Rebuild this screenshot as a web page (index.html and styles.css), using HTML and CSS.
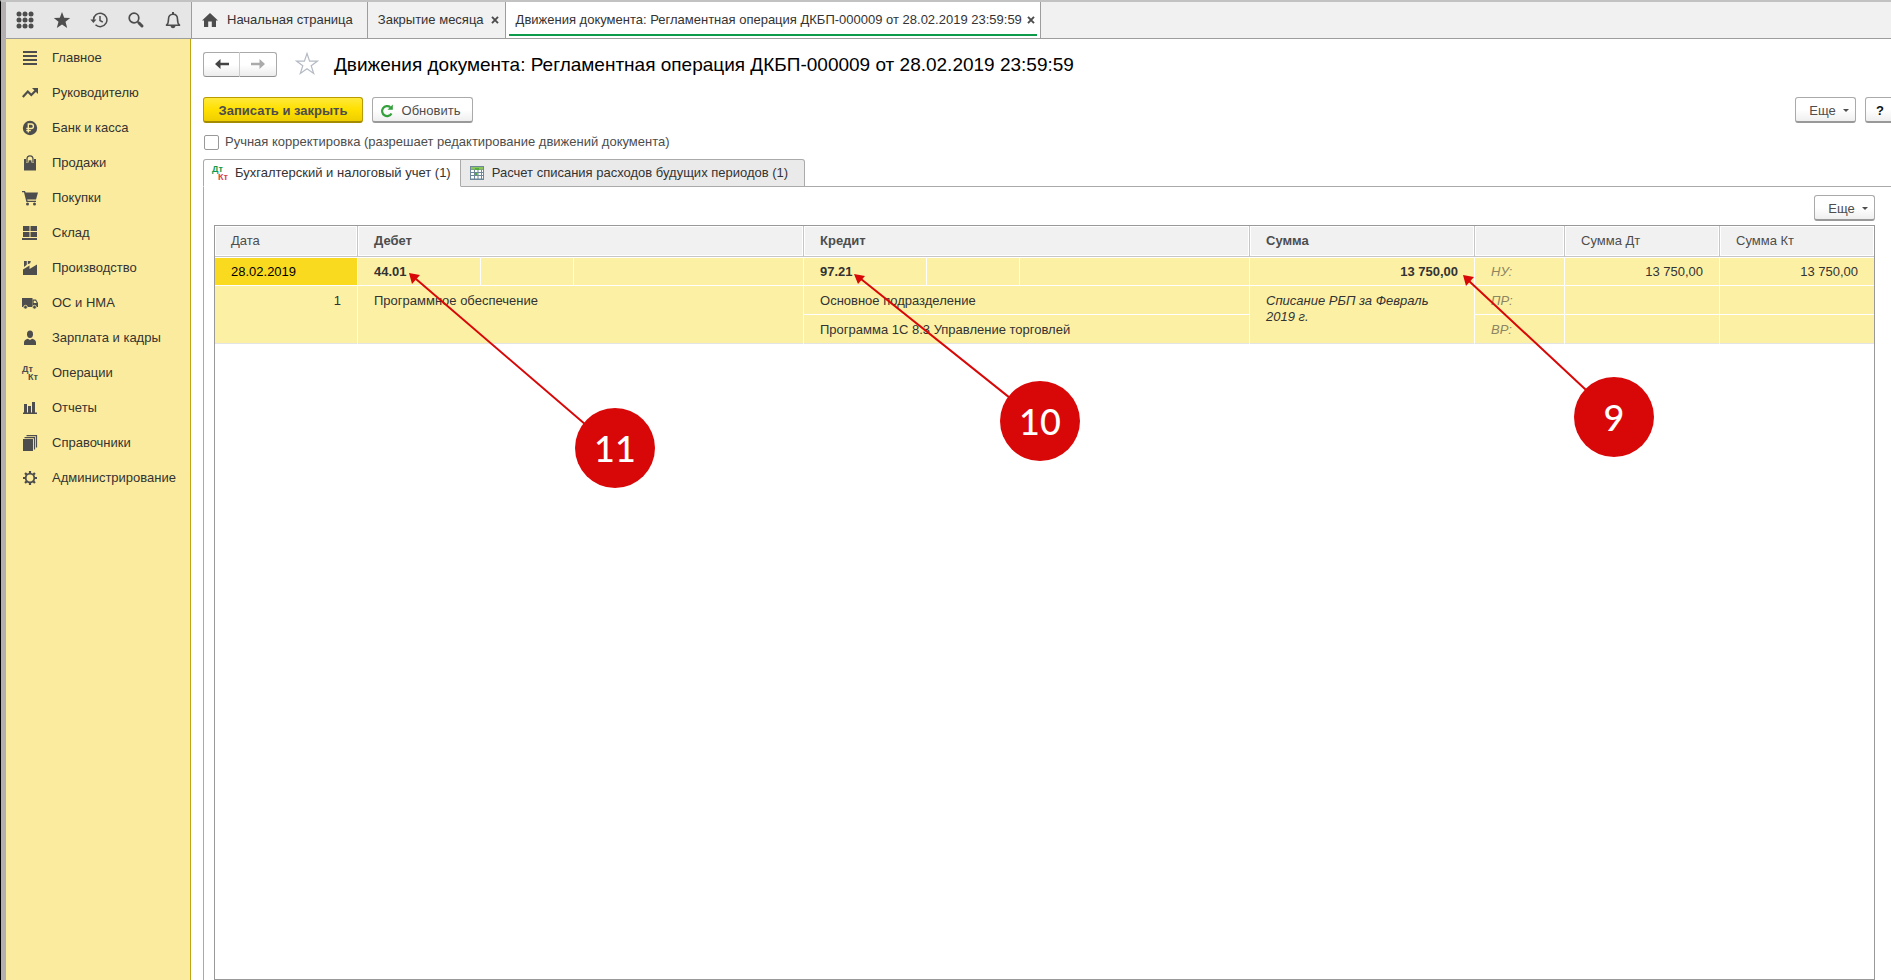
FILE: index.html
```html
<!DOCTYPE html>
<html lang="ru">
<head>
<meta charset="utf-8">
<title>Движения документа: Регламентная операция ДКБП-000009</title>
<link rel="stylesheet" href="styles.css">
</head>
<body>
<div class="window">
  <header class="topbar">
    <div class="tools">
      <button class="tool" aria-label="Меню"><svg width="18" height="18" viewBox="0 0 18 18"><g fill="#4d4d4d"><circle cx="3" cy="3" r="2.500"/><circle cx="9" cy="3" r="2.500"/><circle cx="15" cy="3" r="2.500"/><circle cx="3" cy="9" r="2.500"/><circle cx="9" cy="9" r="2.500"/><circle cx="15" cy="9" r="2.500"/><circle cx="3" cy="15" r="2.500"/><circle cx="9" cy="15" r="2.500"/><circle cx="15" cy="15" r="2.500"/></g></svg></button>
      <button class="tool" aria-label="Избранное"><svg width="18" height="18" viewBox="0 0 18 18"><path fill="#4d4d4d" d="M9 1l2.200 5.700 6 .3-4.700 3.800 1.700 6.200L9 13.600 3.800 17l1.700-6.200L.8 7l6-.3z"/></svg></button>
      <button class="tool" aria-label="История"><svg width="18" height="18" viewBox="0 0 18 18" fill="none" stroke="#4d4d4d" stroke-width="1.500"><path d="M3.500 9.500V9a6.700 6.700 0 1 1 2 4.700"/><path d="M10 5v4.500l2.800 1.700"/><path d="M.4 8.500h6L3.400 12z" fill="#4d4d4d" stroke="none"/></svg></button>
      <button class="tool" aria-label="Поиск"><svg width="18" height="18" viewBox="0 0 18 18" fill="none" stroke="#4d4d4d"><circle cx="7" cy="7" r="4.800" stroke-width="1.700"/><path d="M10.500 10.500l1.500 1.500" stroke-width="1.700"/><path d="M12 12l3 3" stroke-width="3" stroke-linecap="round"/></svg></button>
      <button class="tool" aria-label="Уведомления"><svg width="18" height="18" viewBox="0 0 18 18"><path fill="none" stroke="#4d4d4d" stroke-width="1.600" stroke-linejoin="round" d="M2.500 14.200c1.800-1.500 2-3 2-6 0-3 1.700-5 4.500-5s4.500 2 4.500 5c0 3 .2 4.500 2 6z"/><path fill="#4d4d4d" d="M8 1h2v2.500H8zM6.500 15h5c-.5 1.500-1.200 2.200-2.500 2.200S7 16.500 6.500 15z"/></svg></button>
    </div>
    <nav class="tabs" aria-label="Открытые окна">
      <a class="tab tab-home" href="#"><svg width="16" height="14" viewBox="0 0 16 14"><path fill="#4d4d4d" d="M8 0l8 7.500h-2V14H9.800V8.500H6.200V14H2V7.500H0z"/></svg><span>Начальная страница</span></a>
      <div class="tab"><a href="#">Закрытие месяца</a><button class="close" aria-label="Закрыть"><svg width="8" height="8" viewBox="0 0 8 8"><path d="M1 .8l6 6.400M7 .8L1 7.200" stroke="#4d4d4d" stroke-width="1.900"/></svg></button></div>
      <div class="tab tab-active"><a href="#">Движения документа: Регламентная операция ДКБП-000009 от 28.02.2019 23:59:59</a><button class="close" aria-label="Закрыть"><svg width="8" height="8" viewBox="0 0 8 8"><path d="M1 .8l6 6.400M7 .8L1 7.200" stroke="#4d4d4d" stroke-width="1.900"/></svg></button></div>
    </nav>
  </header>
  <div class="body">
    <nav class="sidebar" aria-label="Разделы">
      <a href="#"><svg class="ico" viewBox="0 0 16 16"><path fill="#4d4d4d" d="M1 1h14v2H1zM1 5h14v2H1zM1 9h14v2H1zM1 13h14v2H1z"/></svg>Главное</a>
      <a href="#"><svg class="ico" viewBox="0 0 16 16"><path fill="none" stroke="#4d4d4d" stroke-width="2.200" d="M.8 12l5-5.500 3.500 3.500 5-5"/><path fill="#4d4d4d" d="M10 3h6v6z"/></svg>Руководителю</a>
      <a href="#"><svg class="ico" viewBox="0 0 16 16"><circle cx="8" cy="8" r="7.200" fill="#4d4d4d"/><path fill="none" stroke="#faeb9e" stroke-width="1.400" d="M6.300 12.500V4h2.900a2.200 2.200 0 0 1 0 4.500H4.300M4.300 10.600h4.500"/></svg>Банк и касса</a>
      <a href="#"><svg class="ico" viewBox="0 0 16 16"><path fill="#4d4d4d" d="M2 4h12v11.500H2z"/><path fill="#faeb9e" d="M4 3.500h8v1.800H4z"/><path fill="none" stroke="#faeb9e" stroke-width="2.600" d="M5.300 7.500V4M10.700 7.500V4"/><path fill="none" stroke="#4d4d4d" stroke-width="1.300" d="M5 7V4c0-4.300 6-4.300 6 0v3"/></svg>Продажи</a>
      <a href="#"><svg class="ico" viewBox="0 0 16 16"><path fill="#4d4d4d" d="M0 1h3l.6 1.500H16L14 9.500H5.200l.4 1.300H14V12H4.400L2 2.200H0z"/><circle cx="5.500" cy="14" r="1.500" fill="#4d4d4d"/><circle cx="12.500" cy="14" r="1.500" fill="#4d4d4d"/></svg>Покупки</a>
      <a href="#"><svg class="ico" viewBox="0 0 16 16"><path fill="#4d4d4d" d="M1 1h6.500v5H1zM8.500 1H15v5H8.500zM1 7h6.500v5H1zM8.500 7H15v5H8.500zM0 13h15v2H0z"/></svg>Склад</a>
      <a href="#"><svg class="ico" viewBox="0 0 16 16"><path fill="#4d4d4d" d="M1 15V9.500L7.500 5.500V9L15 4.500V15zM2 1h2.800v3.800L2 7zM5.800 1h3l-.6 2.200-2.400 1z"/></svg>Производство</a>
      <a href="#"><svg class="ico" viewBox="0 0 16 16"><path fill="#4d4d4d" d="M0 3h10.500v9H0z"/><path fill="#4d4d4d" d="M10.500 4.500h3.500L16 8v4h-5.500z"/><path fill="#faeb9e" d="M11.700 5.700h1.800L14.700 8h-3z"/><g fill="#4d4d4d" stroke="#faeb9e" stroke-width=".8"><circle cx="3.500" cy="12.200" r="1.900"/><circle cx="12.500" cy="12.200" r="1.900"/></g></svg>ОС и НМА</a>
      <a href="#"><svg class="ico" viewBox="0 0 16 16"><ellipse cx="8" cy="4.200" rx="3" ry="3.700" fill="#4d4d4d"/><path fill="#4d4d4d" d="M2 15v-2.500c0-2 2-3.200 3.800-3.700L8 10l2.200-1.200c1.800.5 3.800 1.700 3.800 3.700V15z"/></svg>Зарплата и кадры</a>
      <a href="#"><span class="dtkt"><span>Дт</span><span>Кт</span></span>Операции</a>
      <a href="#"><svg class="ico" viewBox="0 0 16 16"><path fill="#4d4d4d" d="M2 4h3v9H2zM6 6h3v7H6zM10 2h3v11h-3zM1 12.500h14V14H1z"/></svg>Отчеты</a>
      <a href="#"><svg class="ico" viewBox="0 0 16 16"><path fill="#4d4d4d" d="M1 4h10v12H1z"/><path fill="none" stroke="#4d4d4d" stroke-width="1.200" d="M2.500 2.600h10V14.500M4.500.6h10v12"/></svg>Справочники</a>
      <a href="#"><svg class="ico" viewBox="0 0 16 16"><g fill="none" stroke="#4d4d4d"><circle cx="8" cy="8" r="4.300" stroke-width="1.800"/><path stroke-width="2.200" d="M8 1v2.500M8 12.500V15M1 8h2.500M12.500 8H15M3.050 3.050l1.800 1.800M11.150 11.150l1.800 1.800M12.950 3.050l-1.800 1.800M4.850 11.150l-1.800 1.800"/></g></svg>Администрирование</a>
    </nav>
    <main class="content">
      <div class="titlebar">
        <div class="history">
          <button aria-label="Назад"><svg width="14" height="10" viewBox="0 0 14 10"><path fill="#444" d="M0 5l5.500-5v3.700H14v2.600H5.500V10z"/></svg></button>
          <button aria-label="Вперед"><svg width="14" height="10" viewBox="0 0 14 10"><path fill="#aaa" d="M14 5L8.500 0v3.700H0v2.600h8.500V10z"/></svg></button>
        </div>
        <button class="fav" aria-label="В избранное"><svg width="24" height="24" viewBox="0 0 24 24"><path fill="#fff" stroke="#b4bac4" stroke-width="1.200" d="M12 1.500l2.600 7.600h8l-6.400 4.700 2.500 7.700L12 16.800l-6.700 4.700 2.500-7.700L1.400 9.100h8z"/></svg></button>
        <h1>Движения документа: Регламентная операция ДКБП-000009 от 28.02.2019 23:59:59</h1>
      </div>
      <div class="commands">
        <button class="btn btn-primary">Записать и закрыть</button>
        <button class="btn btn-refresh"><svg width="14" height="14" viewBox="0 0 14 14"><path fill="none" stroke="#34a03c" stroke-width="2.200" d="M11.500 9.500A5 5 0 1 1 10.300 3.200"/><path fill="#34a03c" d="M12.800.5v5.300H7.500z"/></svg>Обновить</button>
        <span class="spacer"></span>
        <button class="btn btn-more">Еще<i class="caret"></i></button>
        <button class="btn btn-help">?</button>
      </div>
      <label class="manual"><input type="checkbox">Ручная корректировка (разрешает редактирование движений документа)</label>
      <div class="pages">
        <button class="page page-active"><span class="dtkt dtkt-color"><span>Дт</span><span>Кт</span></span>Бухгалтерский и налоговый учет (1)</button>
        <button class="page"><svg width="14" height="14" viewBox="0 0 14 14"><path fill="#6d8898" d="M0 0h14v14H0z"/><path fill="#8cc55c" d="M1 1h12v2.500H1z"/><path fill="#fff" d="M1 4h3v2H1zM5 4h2.500v2H5zM8.500 4H11v2H8.500zM12 4h1v2h-1zM1 7h3v2H1zM5 7h2.500v2H5zM12 7h1v2h-1zM1 10h3v2.500H1zM5 10h2.500v2.500H5zM8.500 10H11v2.500H8.500zM12 10h1v2.500h-1z"/><path fill="#4fae3c" d="M5 2h4v2H5zM5 7h2.500v2H5z"/><path fill="#fff" d="M8.500 7H11v2H8.500z"/></svg>Расчет списания расходов будущих периодов (1)</button>
      </div>
      <section class="panel">
        <div class="panel-bar"><button class="btn btn-more">Еще<i class="caret"></i></button></div>
        <div class="grid">
          <table>
            <colgroup><col class="c-date"><col class="c-acc"><col class="c-qty"><col class="c-rest"><col class="c-acc"><col class="c-qty"><col class="c-rest"><col class="c-sum"><col class="c-kind"><col class="c-dt"><col class="c-kt"></colgroup>
            <thead>
              <tr><th>Дата</th><th class="strong" colspan="3">Дебет</th><th class="strong" colspan="3">Кредит</th><th class="strong">Сумма</th><th></th><th>Сумма Дт</th><th>Сумма Кт</th></tr>
            </thead>
            <tbody>
              <tr><td class="selected">28.02.2019</td><td class="strong">44.01</td><td></td><td></td><td class="strong">97.21</td><td></td><td></td><td class="strong num">13 750,00</td><td class="kind">НУ:</td><td class="num">13 750,00</td><td class="num">13 750,00</td></tr>
              <tr><td class="num" rowspan="2">1</td><td colspan="3" rowspan="2">Программное обеспечение</td><td colspan="3">Основное подразделение</td><td class="note" rowspan="2">Списание РБП за Февраль 2019 г.</td><td class="kind">ПР:</td><td></td><td></td></tr>
              <tr><td colspan="3">Программа 1С 8.3 Управление торговлей</td><td class="kind">ВР:</td><td></td><td></td></tr>
            </tbody>
          </table>
        </div>
      </section>
    </main>
  </div>
  <svg class="callouts" width="1891" height="980" viewBox="0 0 1891 980">
    <g stroke="#d80808" stroke-width="2"><path d="M416 279L600 437M861 279L1020 406M1469 281L1600 403"/></g>
    <g fill="#d80808">
      <path d="M409 273l11 2-8 9zM854 274l11 2-7 8zM1463 275l11 2-8 9z"/>
      <circle cx="615" cy="448" r="40"/><circle cx="1040" cy="421" r="40"/><circle cx="1614" cy="417" r="40"/>
    </g>
    <g class="callout-text"><text x="615" y="462">11</text><text x="1040" y="435">10</text><text x="1614" y="431">9</text></g>
  </svg>
</div>
</body>
</html>
```
FILE: styles.css
```css
* { box-sizing: border-box; }
body {
  margin: 0;
  font: 13px/16px "Liberation Sans", Arial, sans-serif;
  color: #333;
  background: #fff;
}
button { font: inherit; color: inherit; margin: 0; cursor: pointer; }
a { color: inherit; text-decoration: none; }
svg { flex: none; }

.window {
  position: relative;
  display: flex;
  flex-direction: column;
  height: 100vh;
  overflow: hidden;
  border-top: 2px solid #c2c2c2;
  border-left: 1px solid #000;
  box-shadow: inset 5px 0 #b3aeb0;
  padding-left: 5px;
}

.topbar {
  display: flex;
  flex: none;
  height: 37px;
  background: #f1f1f1;
  border-bottom: 1px solid #9d9d9d;
}
.tools {
  display: flex;
  align-items: center;
  width: 186px;
  background: #e6e6e6;
  border-right: 1px solid #9d9d9d;
}
.tool {
  display: flex;
  justify-content: center;
  width: 37px;
  padding: 0;
  border: 0;
  background: none;
}
.tabs { display: flex; }
.tab {
  display: flex;
  align-items: center;
  gap: 7px;
  padding: 0 6px 0 10px;
  border-right: 1px solid #9d9d9d;
  white-space: nowrap;
}
.tab-home { gap: 9px; padding: 0 14px 0 10px; }
.tab-active {
  position: relative;
  gap: 5px;
  padding-right: 5px;
  background: #fff;
}
.tab-active::after {
  content: "";
  position: absolute;
  left: 3px;
  right: 3px;
  bottom: 2px;
  height: 2px;
  background: #0d9b4b;
}
.close { display: flex; padding: 0; border: 0; background: none; }

.body { display: flex; flex: 1; min-height: 0; }
.sidebar {
  flex: none;
  width: 185px;
  padding-top: 1px;
  background: #fbeb9e;
  border-right: 1px solid #bfa414;
}
.sidebar a {
  display: flex;
  align-items: center;
  gap: 14px;
  height: 35px;
  padding-left: 16px;
  white-space: nowrap;
}
.ico { width: 16px; height: 16px; }
.dtkt {
  display: flex;
  flex-direction: column;
  flex: none;
  width: 16px;
  font: bold 9px/8px "Liberation Sans", Arial, sans-serif;
  color: #4d4d4d;
}
.dtkt span:last-child { align-self: flex-end; }

.content {
  flex: 1;
  min-width: 0;
  display: flex;
  flex-direction: column;
  padding-left: 12px;
  overflow: hidden;
}
.titlebar { display: flex; align-items: center; height: 50px; }
.history { display: flex; }
.history button {
  display: flex;
  align-items: center;
  justify-content: center;
  width: 37px;
  height: 25px;
  padding: 0;
  border: 1px solid #aaa;
  border-bottom-color: #8f8f8f;
  background: linear-gradient(#fff 50%, #ececec);
}
.history button:first-child { border-radius: 3px 0 0 3px; border-right-color: #ccc; }
.history button:last-child { border-radius: 0 3px 3px 0; border-left: 0; }
.fav { display: flex; margin: 0 15px 0 18px; padding: 0; border: 0; background: none; }
h1 { margin: 0; padding-top: 2px; font-size: 19px; line-height: 24px; font-weight: normal; color: #000; white-space: nowrap; }

.commands {
  display: flex;
  gap: 9px;
  padding-top: 8px;
  margin-right: -12px;
}
.spacer { flex: 1; }
.btn {
  display: flex;
  align-items: center;
  justify-content: center;
  height: 26px;
  padding: 2px 13px 0;
  border: 1px solid #aaa;
  border-bottom: 2px solid #999;
  border-radius: 3px;
  background: linear-gradient(#fff 50%, #efefef);
  color: #4d4d4d;
  white-space: nowrap;
}
.btn-primary {
  width: 160px;
  border-color: #b79b00;
  border-bottom-color: #a58b00;
  background: linear-gradient(#ffe93a, #ffe000 50%, #efce00);
  font-weight: bold;
}
.btn-refresh { width: 101px; gap: 8px; padding: 2px 5px 0 0; }
.btn-more { width: 61px; gap: 7px; padding: 2px 5px 0 12px; }
.btn-help { width: 38px; padding: 2px 8px 0 0; color: #111; font-weight: bold; }
.caret {
  border: 3px solid transparent;
  border-top-color: #4d4d4d;
  border-bottom: 0;
}

.manual {
  display: flex;
  align-items: center;
  gap: 6px;
  height: 16px;
  margin-top: 11px;
  color: #4d4d4d;
}
.manual input {
  appearance: none;
  width: 15px;
  height: 15px;
  margin: 0 0 0 1px;
  border: 1px solid #999;
  border-radius: 2px;
  background: #fff;
}

.pages {
  display: flex;
  flex: none;
  height: 28px;
  margin-top: 9px;
  border-bottom: 1px solid #aaa;
}
.page {
  display: flex;
  align-items: center;
  gap: 8px;
  height: 28px;
  padding: 0 16px 0 9px;
  border: 1px solid #aaa;
  border-left: 0;
  border-radius: 0 3px 0 0;
  background: #eaeaea;
  white-space: nowrap;
}
.page-active {
  gap: 7px;
  padding: 0 9px 0 8px;
  border-left: 1px solid #aaa;
  border-right: 1px solid #aaa;
  border-bottom-color: #fff;
  border-radius: 3px 0 0 0;
  background: #fff;
}
.dtkt-color { color: #0d9b4b; }
.dtkt-color span { align-self: flex-start; }
.dtkt-color span:last-child { color: #d9434a; }

.panel {
  display: flex;
  flex: 1;
  flex-direction: column;
  min-height: 0;
  padding: 8px 16px 0 10px;
  border-left: 1px solid #aaa;
}
.panel-bar { display: flex; justify-content: flex-end; height: 30px; }
.grid { flex: 1; border: 1px solid #999; }

table {
  width: 100%;
  table-layout: fixed;
  border-collapse: separate;
  border-spacing: 0;
}
.c-date { width: 143px; }
.c-acc { width: 123px; }
.c-qty { width: 93px; }
.c-rest { width: 230px; }
.c-sum { width: 225px; }
.c-kind { width: 90px; }
.c-dt { width: 155px; }
.c-kt { width: 154px; }
th {
  height: 31px;
  padding: 0 16px;
  border-right: 1px solid #c6c6c6;
  border-bottom: 1px solid #c6c6c6;
  background: #f1f1f1;
  box-shadow: inset 0 0 0 1px #fff;
  color: #4d4d4d;
  font-weight: normal;
  text-align: left;
}
td {
  height: 29px;
  padding: 7px 16px 5px;
  border-right: 1px solid #fff;
  border-bottom: 1px solid #fff;
  background: #fcf0a5;
  vertical-align: top;
}
tr > :last-child { border-right: 0; }
tbody tr:first-child td { box-shadow: inset 0 1px #fff; }
tbody tr:last-child td, td[rowspan] { border-bottom-color: #e4e4e4; }
td.selected { background: #fada1f; color: #000; }
.strong, th.strong { font-weight: bold; }
.num { text-align: right; }
.note { font-style: italic; }
.kind { font-style: italic; color: #8c8562; }

.callouts {
  position: absolute;
  top: -2px;
  left: -1px;
  pointer-events: none;
}
.callout-text {
  fill: #fff;
  font: 500 36px Lato, sans-serif;
  text-anchor: middle;
}
```
